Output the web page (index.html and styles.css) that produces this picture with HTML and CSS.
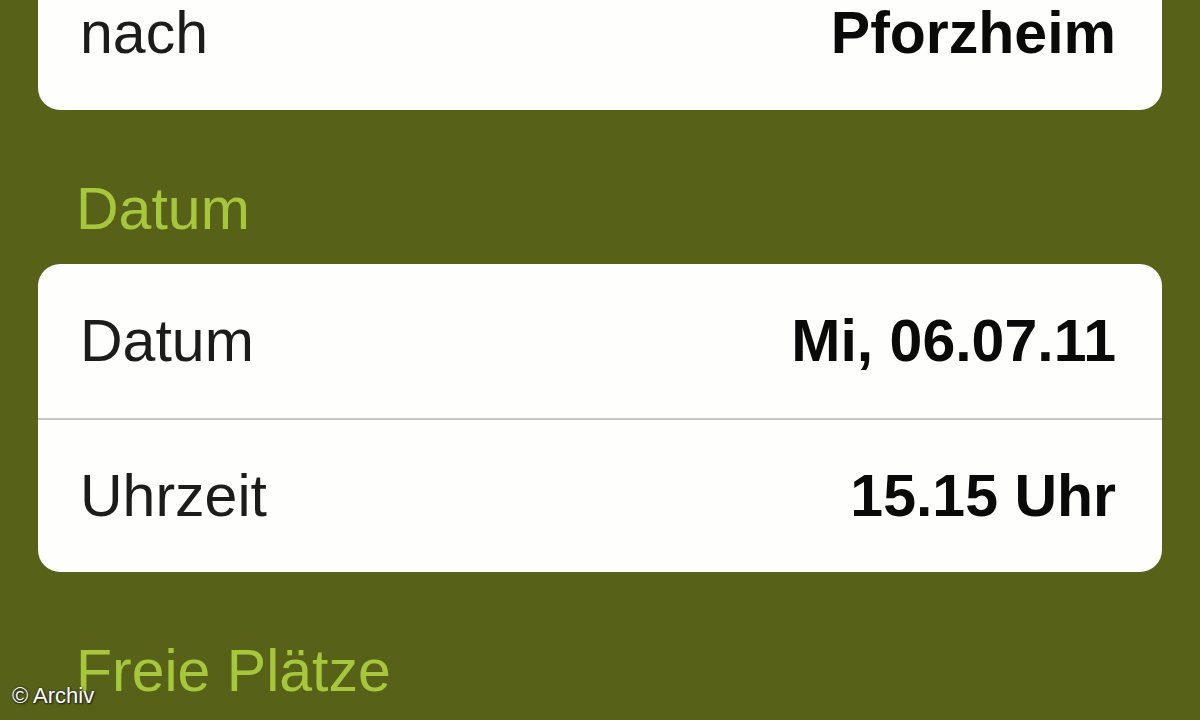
FILE: index.html
```html
<!DOCTYPE html>
<html lang="de">
<head>
<meta charset="utf-8">
<title>Mitfahrgelegenheit</title>
<link rel="stylesheet" href="styles.css">
</head>
<body>
<div class="screen">
  <div class="content">
    <div class="card">
      <div class="row"><span class="label">nach</span><span class="value">Pforzheim</span></div>
    </div>
    <div class="section">Datum</div>
    <div class="card">
      <div class="row"><span class="label">Datum</span><span class="value">Mi, 06.07.11</span></div>
      <div class="row"><span class="label">Uhrzeit</span><span class="value">15.15 Uhr</span></div>
    </div>
    <div class="section">Freie Plätze</div>
  </div>
  <div class="credit">© Archiv</div>
</div>
</body>
</html>
```

FILE: styles.css
```css
html, body {
  margin: 0;
  padding: 0;
}
body {
  background: #576218;
  font-family: "Liberation Sans", Arial, sans-serif;
}
.screen {
  position: relative;
  width: 1200px;
  height: 720px;
  overflow: hidden;
  background: #576218;
}
.content {
  margin-top: -44px;
  padding: 0 38px;
}
.card {
  background: #fefefc;
  border-radius: 22px;
  overflow: hidden;
}
.row {
  height: 154px;
  display: flex;
  align-items: center;
  justify-content: space-between;
  padding: 0 46px 0 42px;
  box-sizing: border-box;
  font-size: 59px;
  line-height: 60px;
}
.row + .row {
  border-top: 2px solid #c6c6c2;
  height: 154px;
}
.label {
  color: #1c1c1c;
}
.value {
  color: #0a0a0a;
  font-weight: bold;
}
.section {
  height: 154px;
  box-sizing: border-box;
  padding: 69px 0 25px 38px;
  font-size: 59px;
  line-height: 60px;
  color: #a6c63c;
}
.credit {
  position: absolute;
  left: 12px;
  top: 683px;
  font-size: 22px;
  color: #ffffff;
  text-shadow: 0 0 2px #1a1a1a, 1px 1px 2px #1a1a1a;
}
```
